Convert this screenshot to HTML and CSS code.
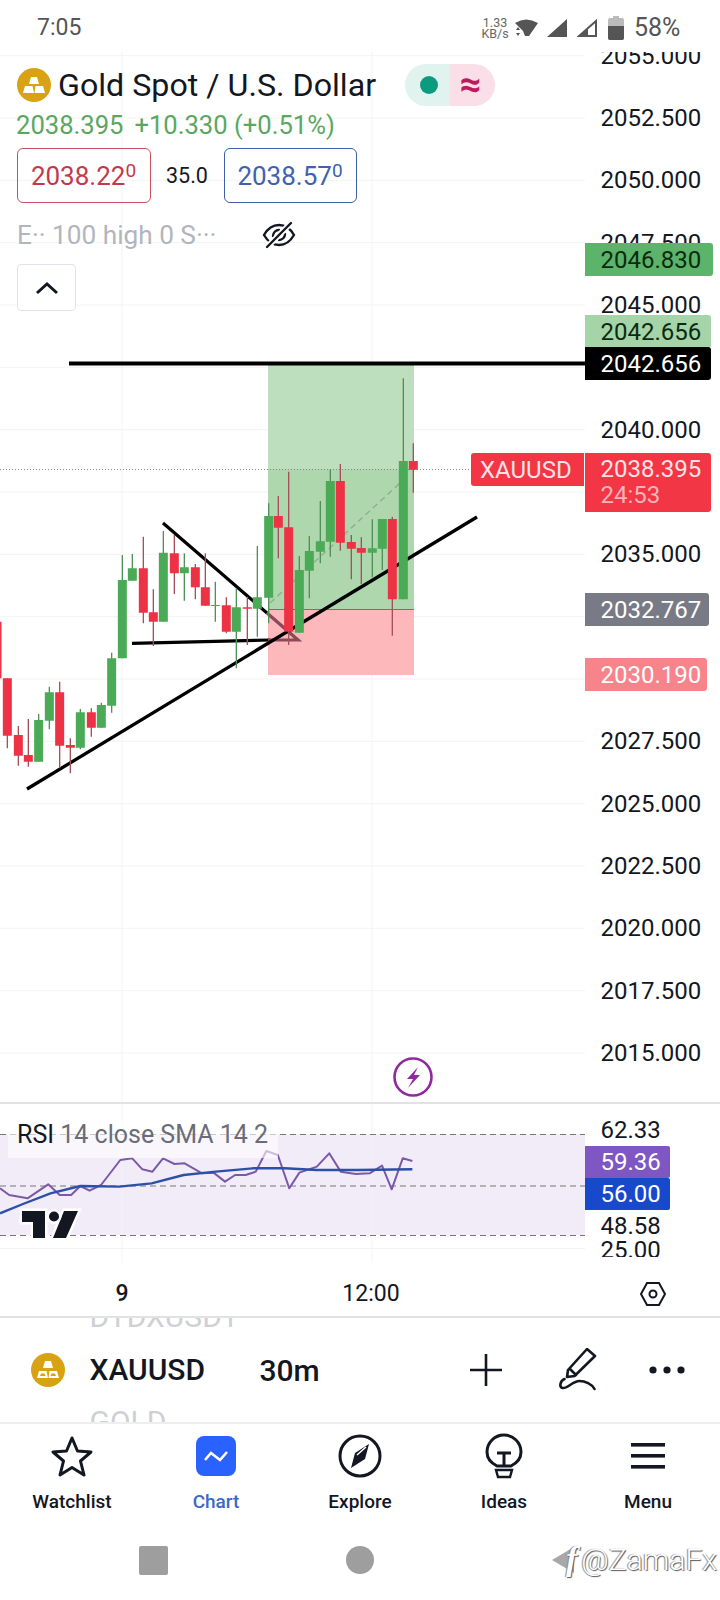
FILE: index.html
```html
<!DOCTYPE html>
<html lang="en">

<head>
    <meta charset="UTF-8">
    <title>XAUUSD chart</title>
    <link rel="stylesheet" href="styles.css">
</head>

<body>
    <!-- Phone status bar -->
    <div class="status">
        <span class="clock">7:05</span>
        <span class="speed">1.33<br>KB/s</span>
        <svg class="ico-wifi" width="25" height="20" viewBox="0 0 25 20">
            <path d="M1 5Q12-2 24 5L15 18H11L9 13Z" />
            <path d="M2 12l2-3 2 3zM2 15l2 3 2-3z" />
        </svg>
        <svg class="ico-sig1" width="20" height="18" viewBox="0 0 20 18">
            <path d="M20 0V18H0Z" />
        </svg>
        <svg class="ico-sig2" width="20" height="18" viewBox="0 0 20 18">
            <path d="M19 2V17H2Z" fill="none" stroke="#555" stroke-width="2" />
            <path d="M11 10V18H1Z" />
        </svg>
        <svg class="ico-batt" width="16" height="24" viewBox="0 0 16 24">
            <path d="M5 0h6v2h3a2 2 0 0 1 2 2v18a2 2 0 0 1-2 2H2a2 2 0 0 1-2-2V4a2 2 0 0 1 2-2h3z" fill="#bbb" />
            <path d="M0 10h16v12a2 2 0 0 1-2 2H2a2 2 0 0 1-2-2z" />
        </svg>
        <span class="battery">58%</span>
    </div>

    <!-- Main price pane -->
    <div class="chart">
        <div class="plot">
            <svg class="plot-svg" width="585" height="1050" viewBox="0 52 585 1050">
                <path class="grid" d="M0 55.7H585M0 118H585M0 180.3H585M0 242.6H585M0 305H585M0 367.300H585M0 429.700H585M0 492H585M0 554.300H585M0 616.700H585M0 679H585M0 741.300H585M0 803.700H585M0 866H585M0 928.300H585M0 990.700H585M0 1053H585M122 52V1102M372 52V1102" />

                <!-- Long position tool -->
                <rect x="268" y="365" width="146" height="104" fill="#bddfbd" />
                <rect x="268" y="469" width="146" height="140" fill="#aed7ae" />
                <rect x="268" y="609" width="146" height="66" fill="#fdb8bb" />
                <path d="M268 609.5H414" stroke="#a0605f" stroke-width="1.2" />
                <path d="M270 603L400 483" stroke="#8fae8f" stroke-width="1.4" stroke-dasharray="6 4" />

                <!-- Last price line -->
                <path d="M0 469.5H471" stroke="#8a8a8a" stroke-width="1" stroke-dasharray="1 2" />

                <!-- Drawings -->
                <path class="draw" d="M69 363.5H585" stroke-width="3.800" />
                <path class="draw" d="M163 523L267 613M132 643.3L270 640" stroke-width="3.200" />
                <path class="draw-faded" d="M267 613L298 640H268" stroke-width="3.200" />
                <path class="draw" d="M27 789L477 517" stroke-width="3.300" />

                <!-- Candles, in the coordinates of a 3x crop -->
                <g transform="translate(0 340) scale(.33333)">
                    <path class="wick-up" d="M116 1122V1265M148 1040V1168M241 1107V1228M304 1088V1163M335 938V1118M367 645V955M397 642V722M490 573V845M553 640V782M646 725V845M709 745V985M772 618V890M806 490V850M898 648V878M928 588V775M961 483V670M991 388V650M1117 538V712M1147 537V690M1210 115V778" />
                    <path class="wick-down" d="M22 1015V1225M55 1158V1277M85 1137V1280M179 1025V1285M211 1195V1300M274 1105V1190M430 590V850M460 748V918M523 585V762M586 672V778M616 640V797M679 772V880M742 770V915M835 468V655M866 395V915M1021 372V632M1054 585V718M1084 592V732M1177 530V887M1240 310V458" />
                    <path class="body-down" d="M-9 845V1015M22 1015V1187M55 1185V1247M85 1245V1265M179 1057V1217M211 1215V1223M274 1117V1163M430 685V818M460 817V845M523 640V700M586 682V742M616 742V797M679 796V875M742 802V806M835 528V563M866 562V875M1021 423V608M1054 606V626M1084 624V638M1177 537V778M1240 363V389" />
                    <path class="body-up" d="M116 1140V1265M148 1057V1142M241 1117V1223M304 1095V1163M335 955V1097M367 720V955M397 685V722M490 638V845M553 682V700M646 795V798M709 802V875M772 772V806M806 528V773M898 690V878M928 633V692M961 604V635M991 423V605M1117 625V638M1147 537V626M1210 363V778" />
                </g>

                <!-- Bolt marker -->
                <circle cx="413" cy="1077" r="18.500" fill="#fff" stroke="#8e2a9e" stroke-width="2.6" />
                <path d="M418 1067L407 1079H413L408 1088L420 1075H414Z" fill="#8e2a9e" />
            </svg>

            <!-- Legend over the chart -->
            <div class="legend">
                <div class="legend-title">
                    <svg class="coin" width="34" height="34" viewBox="0 0 34 34">
                        <circle cx="17" cy="17" r="17" fill="#d9a215" />
                        <path d="M14 9H20L22 16H12ZM8 18H15.500L17 25H6ZM18.500 18H26L28 25H17.500Z" fill="#fff" />
                    </svg>
                    <span class="title">Gold Spot / U.S. Dollar</span>
                    <div class="pill">
                        <div class="pill-left"><span class="pill-dot"></span></div>
                        <div class="pill-right">≈</div>
                    </div>
                </div>
                <div class="legend-price">
                    <span>2038.395</span>
                    <span>+10.330 (+0.51%)</span>
                </div>
                <div class="quotes">
                    <div class="quote quote-bid">2038.22<sup>0</sup></div>
                    <div class="spread">35.0</div>
                    <div class="quote quote-ask">2038.57<sup>0</sup></div>
                </div>
                <div class="study">
                    <span class="study-name">E·· 100 high 0 S···</span>
                    <svg width="34" height="28" viewBox="0 0 34 28" fill="none" stroke="#131722" stroke-width="2.400" stroke-linecap="round">
                        <path d="M2 14C6 7 11 4 17 4s11 3 15 10c-4 7-9 10-15 10S6 21 2 14Z" />
                        <path d="M11 15A6 6 0 0 1 17 9M23 13A6 6 0 0 1 17 19" />
                        <path d="M29 2L5 26" stroke="#fff" stroke-width="6" stroke-linecap="butt" />
                        <path d="M29 2L5 26" />
                    </svg>
                </div>
                <div class="collapse">
                    <svg width="24" height="14" viewBox="0 0 24 14" fill="none" stroke="#131722" stroke-width="3">
                        <path d="M2 12L12 3L22 12" />
                    </svg>
                </div>
            </div>
        </div>

        <!-- Price scale -->
        <div class="scale">
            <div class="tick">2055.000</div>
            <div class="tick">2052.500</div>
            <div class="tick">2050.000</div>
            <div class="tick">2047.500</div>
            <div class="tick">2045.000</div>
            <div class="tick">2042.500</div>
            <div class="tick">2040.000</div>
            <div class="tick">2037.500</div>
            <div class="tick">2035.000</div>
            <div class="tick">2032.500</div>
            <div class="tick">2030.000</div>
            <div class="tick">2027.500</div>
            <div class="tick">2025.000</div>
            <div class="tick">2022.500</div>
            <div class="tick">2020.000</div>
            <div class="tick">2017.500</div>
            <div class="tick">2015.000</div>
        </div>

        <div class="tag tag-high">2046.830</div>
        <div class="tag tag-target">2042.656</div>
        <div class="tag tag-line">2042.656</div>
        <div class="tag tag-symbol">XAUUSD</div>
        <div class="tag tag-last">2038.395<span class="countdown">24:53</span></div>
        <div class="tag tag-entry">2032.767</div>
        <div class="tag tag-stop">2030.190</div>
    </div>

    <!-- RSI pane -->
    <div class="rsi">
        <div class="rsi-plot">
            <svg class="plot-svg" width="585" height="159" viewBox="0 1104 585 159">
                <rect x="0" y="1134" width="585" height="101" fill="#f1ecf8" />
                <path class="grid" d="M0 1248.500H585M122 1104V1263M372 1104V1263" />
                <path class="rsi-band" d="M0 1134.500H585M0 1186H585M0 1235.500H585" />
                <g transform="scale(.4592 .33333) translate(0 3150)">
                    <path class="rsi-line" d="M0 415L20 435L60 445L105 403L130 435L155 435L175 408L195 422L220 405L262 330L288 325L310 358L332 365L355 325L380 342L402 340L440 370L465 368L490 395L512 375L535 375L557 365L580 303L605 315L630 415L652 368L690 350L717 310L742 365L775 372L805 370L832 347L853 418L877 325L898 333" />
                    <path class="rsi-avg" d="M0 490L50 462L110 430L175 408L260 410L330 400L400 375L470 365L550 355L620 355L690 360L780 360L898 358" />
                </g>
                <!-- TradingView mark -->
                <g class="tv-mark">
                    <path d="M22 1211H45V1238H33V1222H22ZM64 1211H78L66 1238H53Z" />
                    <circle cx="54" cy="1216.500" r="5" />
                </g>
            </svg>
            <div class="rsi-label">RSI <span>14 close SMA 14 2</span></div>
        </div>
        <div class="rsi-scale">
            <div class="rsi-tick rsi-tick-top">62.33</div>
            <div class="rsi-tag rsi-tag-value">59.36</div>
            <div class="rsi-tag rsi-tag-avg">56.00</div>
            <div class="rsi-tick rsi-tick-low">48.58</div>
            <div class="rsi-tick rsi-tick-end">25.00</div>
        </div>
    </div>

    <!-- Time scale -->
    <div class="time">
        <span class="time-day">9</span>
        <span class="time-hour">12:00</span>
        <svg class="time-hex" width="28" height="26" viewBox="0 0 28 26" fill="none" stroke="#131722" stroke-width="2">
            <path d="M8 2H20L26 13L20 24H8L2 13Z" />
            <circle cx="14" cy="13" r="3.500" />
        </svg>
    </div>

    <!-- Symbol toolbar -->
    <div class="toolbar">
        <svg class="coin-small" width="34" height="34" viewBox="0 0 34 34">
            <circle cx="17" cy="17" r="17" fill="#d9a215" />
            <path d="M14 8H20L22 15H12ZM8 18H15.500L17 25H6ZM18.500 18H26L28 25H17.500Z" fill="#fff" />
            <path d="M10 20.500H13.500L14.500 23H9ZM20.500 20.500H24L25 23H19.500Z" fill="#d9a215" />
        </svg>
        <div class="symbols">
            <div class="symbol-off">DTDXUSDT</div>
            <div class="symbol-on">XAUUSD</div>
            <div class="symbol-off">GOLD</div>
        </div>
        <span class="interval">30m</span>
        <svg class="tool-plus" width="34" height="34" viewBox="0 0 34 34" stroke="#131722" stroke-width="2.600">
            <path d="M1 17H33M17 1V33" />
        </svg>
        <svg class="tool-pen" width="40" height="43" viewBox="0 0 40 43" fill="none" stroke="#131722" stroke-width="2.600" stroke-linejoin="round" stroke-linecap="round">
            <path d="M28 1L36 8L15.500 28L8 29L9 22ZM11 21L17 27" />
            <path d="M5.500 31C1 33 0 39 3.500 40C8 41 14 33 20.500 33C26 33 33 36 35.500 41" />
        </svg>
        <svg class="tool-more" width="36" height="8" viewBox="0 0 36 8" fill="#131722">
            <circle cx="4" cy="4" r="3.600" />
            <circle cx="18" cy="4" r="3.600" />
            <circle cx="32" cy="4" r="3.600" />
        </svg>
    </div>

    <!-- Bottom tabs -->
    <div class="nav">
        <div class="nav-item">
            <div class="nav-icon">
                <svg width="42" height="41" viewBox="0 0 42 41" fill="none" stroke="#131722" stroke-width="3" stroke-linejoin="round">
                    <path d="M21 2L26.500 15L40 16L29.500 25L33 39L21 31.500L9 39L12.500 25L2 16L15.500 15Z" />
                </svg>
            </div>
            Watchlist
        </div>
        <div class="nav-item nav-active">
            <div class="nav-icon">
                <div class="chart-tile">
                    <svg width="26" height="14" viewBox="0 0 26 14" fill="none" stroke="#fff" stroke-width="2.600">
                        <path d="M2 11L8 4L17 11L24 3" />
                    </svg>
                </div>
            </div>
            Chart
        </div>
        <div class="nav-item">
            <div class="nav-icon">
                <svg width="44" height="44" viewBox="0 0 44 44">
                    <circle cx="22" cy="22" r="20" fill="none" stroke="#131722" stroke-width="3" />
                    <path d="M31 10L27 25L13 34L17 19Z" fill="#131722" />
                    <path d="M28 13L19 21" stroke="#fff" stroke-width="1.500" />
                </svg>
            </div>
            Explore
        </div>
        <div class="nav-item">
            <div class="nav-icon">
                <svg width="38" height="46" viewBox="0 0 38 46" fill="none" stroke="#131722" stroke-width="3">
                    <path d="M12 33C6 30 2 25 2 19A17 17 0 0 1 36 19C36 25 32 30 26 33Z" />
                    <path d="M12 20H26M19 20V32" />
                    <path d="M11 37H27L25 44H13Z" stroke-width="2.400" />
                </svg>
            </div>
            Ideas
        </div>
        <div class="nav-item">
            <div class="nav-icon">
                <svg width="34" height="26" viewBox="0 0 34 26" fill="#131722">
                    <rect x="0" y="0" width="34" height="3.600" />
                    <rect x="0" y="11" width="34" height="3.600" />
                    <rect x="0" y="22" width="34" height="3.600" />
                </svg>
            </div>
            Menu
        </div>
    </div>

    <!-- Android keys -->
    <div class="keys">
        <span class="key-square"></span>
        <span class="key-circle"></span>
        <span class="key-back"></span>
    </div>

    <div class="watermark"><span class="watermark-f">f</span>@ZamaFx</div>
</body>

</html>
```

FILE: styles.css
```css
* {
    box-sizing: border-box;
}

body {
    margin: 0;
    width: 720px;
    height: 1600px;
    position: relative;
    overflow: hidden;
    background: #fff;
    font-family: Roboto, "Liberation Sans", sans-serif;
    color: #131722;
}

svg {
    display: block;
    flex: none;
}

/* Status bar */
.status {
    height: 52px;
    display: flex;
    align-items: center;
    color: #555;
    fill: #555;
    padding-top: 3px;
}

.clock {
    margin-left: 37px;
    font-size: 23px;
    width: 439px;
}

.speed {
    font-size: 12.500px;
    line-height: 11px;
    width: 38px;
    text-align: center;
    color: #666;
}

.ico-sig1 {
    margin-left: 8px;
}

.ico-sig2 {
    margin-left: 10px;
}

.ico-batt {
    margin-left: 11px;
}

.battery {
    margin-left: 10px;
    font-size: 25px;
}

/* Main pane */
.chart {
    height: 1050px;
    position: relative;
    overflow: hidden;
    display: grid;
    grid-template-columns: 585px 1fr;
}

.plot {
    position: relative;
}

.plot-svg {
    position: absolute;
    top: 0;
    left: 0;
}

.grid {
    fill: none;
    stroke: #f3f3f3;
    stroke-width: 1;
}

.draw {
    fill: none;
    stroke: #000;
}

.draw-faded {
    fill: none;
    stroke: #8b4a58;
}

.wick-up,
.wick-down,
.body-up,
.body-down {
    fill: none;
}

.wick-up {
    stroke: #52905a;
    stroke-width: 4;
}

.wick-down {
    stroke: #a5505a;
    stroke-width: 4;
}

.body-up {
    stroke: #4aaa55;
    stroke-width: 27;
}

.body-down {
    stroke: #ee3245;
    stroke-width: 27;
}

/* Legend */
.legend {
    position: absolute;
    top: 12px;
    left: 16px;
    display: flex;
    flex-direction: column;
    align-items: flex-start;
}

.legend-title {
    height: 42px;
    display: flex;
    align-items: center;
}

.coin {
    margin-left: 1px;
}

.title {
    margin-left: 7px;
    width: 347px;
    font-size: 32.200px;
    white-space: nowrap;
}

.pill {
    width: 90px;
    height: 42px;
    border-radius: 21px;
    overflow: hidden;
    display: flex;
}

.pill-left {
    width: 45px;
    background: #e0f3ef;
    display: flex;
    align-items: center;
    justify-content: flex-end;
    padding-right: 12px;
}

.pill-dot {
    width: 18px;
    height: 18px;
    border-radius: 50%;
    background: #0d9b80;
}

.pill-right {
    width: 45px;
    padding-right: 4px;
    background: #fadfe8;
    color: #c2185b;
    font-size: 38px;
    font-weight: 700;
    line-height: 40px;
    text-align: center;
}

.legend-price {
    height: 30px;
    margin-top: 4px;
    display: flex;
    align-items: center;
    gap: 11px;
    font-size: 25.600px;
    color: #5aa85f;
}

.quotes {
    height: 55px;
    margin-top: 8px;
    display: flex;
    align-items: center;
    margin-left: 0.500px;
}

.quote {
    width: 134px;
    height: 55px;
    border: 1px solid;
    border-radius: 6px;
    font-size: 26px;
    display: flex;
    align-items: center;
    justify-content: center;
}

.quote sup {
    font-size: 19px;
    line-height: 1;
    align-self: flex-start;
    margin-top: 12px;
}

.quote-bid {
    color: #c5384a;
    border-color: #c9505f;
}

.quote-ask {
    width: 133px;
    color: #3f62b0;
    border-color: #3f5fa8;
}

.spread {
    width: 73px;
    text-align: center;
    font-size: 21.500px;
}

.study {
    height: 30px;
    margin-top: 17px;
    display: flex;
    align-items: center;
}

.study-name {
    margin-left: 1px;
    width: 245px;
    font-size: 26.200px;
    color: #b2b5be;
    white-space: nowrap;
}

.collapse {
    width: 59px;
    height: 47px;
    margin-top: 14px;
    margin-left: 1px;
    border: 1px solid #e0e3eb;
    border-radius: 4px;
    background: #fff;
    display: flex;
    align-items: center;
    justify-content: center;
}

/* Price scale */
.scale {
    margin-top: -27.400px;
    padding-left: 15.500px;
    font-size: 24px;
}

.tick {
    height: 62.330px;
    line-height: 62.330px;
}

.tag {
    position: absolute;
    left: 585px;
    height: 33px;
    padding-left: 15.500px;
    font-size: 24px;
    line-height: 34px;
    border-radius: 0 3px 3px 0;
}

.tag-high {
    top: 191px;
    width: 128px;
    background: #5cb36a;
    color: #0b2b10;
}

.tag-target {
    top: 263px;
    width: 126px;
    background: #a5d4a8;
    color: #0b2b10;
}

.tag-line {
    top: 295px;
    width: 126px;
    background: #000;
    color: #fff;
}

.tag-symbol {
    top: 401px;
    left: 471px;
    width: 113px;
    padding-left: 9px;
    background: #f23645;
    color: #fde3e5;
    border-radius: 3px 0 0 3px;
}

.tag-last {
    top: 401px;
    width: 126px;
    height: 59px;
    background: #f23645;
    color: #fde3e5;
    line-height: 26px;
    padding-top: 3px;
}

.countdown {
    display: block;
    color: #fbb4ba;
}

.tag-entry {
    top: 541px;
    width: 124px;
    background: #787b86;
    color: #fff;
}

.tag-stop {
    top: 606px;
    width: 122px;
    background: #f7838b;
    color: #fff;
}

/* RSI pane */
.rsi {
    height: 161px;
    border-top: 2px solid #e2e2e2;
    display: grid;
    grid-template-columns: 585px 1fr;
}

.rsi-plot {
    position: relative;
}

.rsi-band {
    fill: none;
    stroke: #777;
    stroke-width: 1;
    stroke-dasharray: 6 4;
}

.rsi-line,
.rsi-avg {
    fill: none;
    vector-effect: non-scaling-stroke;
    stroke-linejoin: round;
}

.rsi-line {
    stroke: #7a5aa8;
    stroke-width: 2;
}

.rsi-avg {
    stroke: #2d4fa8;
    stroke-width: 2.400;
}

.tv-mark {
    fill: #131722;
    stroke: #fff;
    stroke-width: 5;
    paint-order: stroke;
}

.rsi-label {
    position: absolute;
    top: 17px;
    left: 8px;
    width: 270px;
    height: 37px;
    padding: 0 0 6px 9px;
    background: rgba(255, 255, 255, 0.6);
    font-size: 25px;
    line-height: 27px;
    white-space: nowrap;
}

.rsi-label span {
    color: #6a6d78;
}

.rsi-scale {
    font-size: 24px;
    overflow: hidden;
    height: 153px;
}

.rsi-tick {
    padding-left: 15.500px;
    height: 28px;
    line-height: 28px;
}

.rsi-tick-top {
    margin-top: 12px;
    margin-bottom: 2px;
}

.rsi-tick-low {
    margin-top: 1.500px;
}

.rsi-tick-end {
    margin-top: -4px;
}

.rsi-tag {
    width: 85px;
    height: 32px;
    padding-left: 15.500px;
    line-height: 32px;
    color: #fff;
    border-radius: 0 2px 2px 0;
}

.rsi-tag-value {
    background: #7e57c2;
}

.rsi-tag-avg {
    background: #1848cc;
}

/* Time scale */
.time {
    height: 53px;
    padding-top: 8px;
    display: flex;
    align-items: center;
    font-size: 23px;
}

.time-day {
    width: 44px;
    margin-left: 100px;
    text-align: center;
    font-weight: 500;
}

.time-hour {
    width: 80px;
    margin-left: 187px;
    text-align: center;
}

.time-hex {
    margin-left: 228px;
}

/* Toolbar */
.toolbar {
    height: 108px;
    border-top: 2px solid #e2e2e2;
    border-bottom: 2px solid #eee;
    display: flex;
    align-items: center;
    overflow: hidden;
}

.coin-small {
    margin-left: 31px;
}

.symbols {
    width: 170px;
    margin-left: 24.500px;
    font-size: 30px;
    font-weight: 500;
    white-space: nowrap;
}

.symbols div {
    height: 52.500px;
    line-height: 52.500px;
}

.symbol-off {
    color: #cfd0d4;
    font-weight: 400;
}

.interval {
    width: 209px;
    font-size: 30px;
    font-weight: 500;
}

.tool-pen {
    margin-left: 56px;
    margin-top: -2px;
}

.tool-more {
    margin-left: 50px;
}

/* Tabs */
.nav {
    height: 106px;
    padding-top: 9px;
    display: grid;
    grid-template-columns: repeat(5, 144px);
    font-size: 19px;
    font-weight: 500;
}

.nav-item {
    display: flex;
    flex-direction: column;
    align-items: center;
    line-height: 22px;
}

.nav-icon {
    height: 46px;
    margin-bottom: 12px;
    display: flex;
    align-items: center;
    justify-content: center;
}

.nav-active {
    color: #3d68c4;
}

.chart-tile {
    width: 40px;
    height: 40px;
    border-radius: 8px;
    background: #2962ff;
    display: flex;
    align-items: center;
    justify-content: center;
}

/* Android keys */
.keys {
    height: 60px;
    padding-left: 139px;
    display: flex;
    align-items: center;
}

.key-square {
    width: 29px;
    height: 29px;
    border-radius: 2px;
    background: #9e9e9e;
}

.key-circle {
    width: 28px;
    height: 28px;
    margin-left: 178px;
    border-radius: 50%;
    background: #9e9e9e;
}

.key-back {
    margin-left: 178px;
    width: 0;
    height: 0;
    border-top: 13px solid transparent;
    border-bottom: 13px solid transparent;
    border-right: 22px solid #a8a8a8;
}

/* Watermark over the keys */
.watermark {
    position: absolute;
    top: 1541px;
    left: 566px;
    font-size: 30px;
    font-weight: 300;
    line-height: 36px;
    white-space: nowrap;
    color: #fff;
    text-shadow: 1px 1px 1px #555, -1px 0 1px #888;
}

.watermark-f {
    margin-right: 4px;
    font-family: "Liberation Serif", serif;
    font-size: 34px;
    font-style: italic;
    font-weight: 700;
}
```
